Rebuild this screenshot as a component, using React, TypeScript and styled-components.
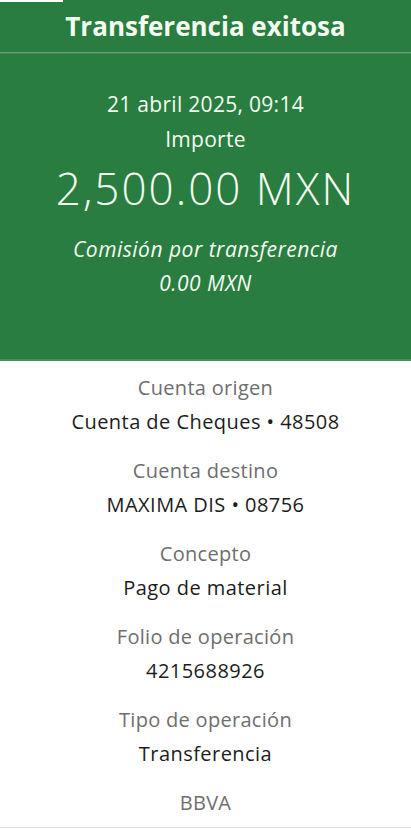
import styled, { createGlobalStyle } from 'styled-components';

const GlobalStyle = createGlobalStyle`
  html, body {
    margin: 0;
    padding: 0;
    background: #ffffff;
  }
  body {
    font-family: "Open Sans", Lato, sans-serif;
  }
`;

const Page = styled.div`
  position: relative;
  width: 411px;
  height: 828px;
  overflow: hidden;
  display: flex;
  flex-direction: column;
  background: #ffffff;
`;

const CornerMark = styled.div`
  position: absolute;
  top: 0;
  left: 0;
  width: 63px;
  height: 2px;
  background: #ffffff;
`;

const Hero = styled.section`
  display: flex;
  flex-direction: column;
  align-items: center;
  background: #2a7d40;
  color: #f4fbf1;
  height: 361px;
  border-bottom: 2px solid #4d8a5a;
  box-sizing: border-box;
`;

const Title = styled.h1`
  margin: 0;
  width: 100%;
  height: 53px;
  box-sizing: border-box;
  padding-top: 9px;
  text-align: center;
  font-size: 26px;
  line-height: 34px;
  font-weight: 700;
  border-bottom: 1px solid rgba(255, 255, 255, 0.28);
  box-shadow: 0 1px 0 rgba(255, 255, 255, 0.12);
`;

const HeroBody = styled.div`
  display: flex;
  flex-direction: column;
  align-items: center;
  padding-top: 39px;
`;

const Line = styled.div<{ $italic?: boolean; $gap?: number }>`
  margin-top: ${(p) => p.$gap ?? 0}px;
  font-size: 21px;
  font-style: ${(p) => (p.$italic ? 'italic' : 'normal')};
  letter-spacing: ${(p) => (p.$italic ? 0.5 : 0.3)}px;
  line-height: 24px;
  text-align: center;
`;

const Amount = styled.div`
  margin: 13px 0 25px;
  font-size: 44px;
  font-weight: 300;
  letter-spacing: 2px;
  line-height: 48px;
  text-align: center;
`;

const Details = styled.section`
  display: flex;
  flex-direction: column;
  align-items: center;
  padding-top: 15px;
  gap: 25px;
  flex: 1;
  border-bottom: 1px solid #e4e4e4;
`;

const Field = styled.div`
  display: flex;
  flex-direction: column;
  align-items: center;
  gap: 10px;
`;

const Label = styled.div`
  font-size: 20px;
  letter-spacing: 0.3px;
  color: #6e6e6e;
  line-height: 24px;
`;

const Value = styled.div`
  font-size: 20px;
  letter-spacing: 0.45px;
  color: #1c1c1c;
  line-height: 24px;
`;

const fields = [
  { label: 'Cuenta origen', value: 'Cuenta de Cheques • 48508' },
  { label: 'Cuenta destino', value: 'MAXIMA DIS • 08756' },
  { label: 'Concepto', value: 'Pago de material' },
  { label: 'Folio de operación', value: '4215688926' },
  { label: 'Tipo de operación', value: 'Transferencia' }
];

export default function App() {
  return (
    <Page>
      <GlobalStyle />
      <CornerMark />
      <Hero>
        <Title>Transferencia exitosa</Title>
        <HeroBody>
          <Line>21 abril 2025, 09:14</Line>
          <Line $gap={11}>Importe</Line>
          <Amount>2,500.00 MXN</Amount>
          <Line $italic>Comisión por transferencia</Line>
          <Line $italic $gap={10}>
            0.00 MXN
          </Line>
        </HeroBody>
      </Hero>
      <Details>
        {fields.map((f) => (
          <Field key={f.label}>
            <Label>{f.label}</Label>
            <Value>{f.value}</Value>
          </Field>
        ))}
        <Field>
          <Label>BBVA</Label>
        </Field>
      </Details>
    </Page>
  );
}
